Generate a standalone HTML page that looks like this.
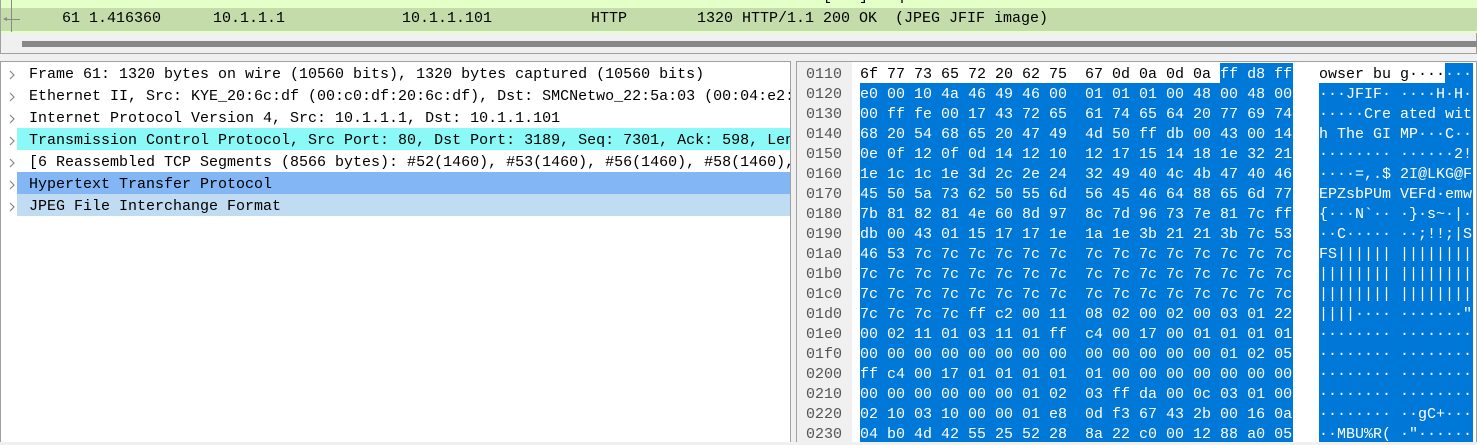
<!DOCTYPE html>
<html><head><style>
*{margin:0;padding:0;box-sizing:border-box}
body{width:1477px;height:442px;overflow:hidden;background:#f0f0f0;position:relative;font-family:"Liberation Mono",monospace;font-size:15px;color:#000}
.a{position:absolute;white-space:pre}
.r{position:absolute;height:22px;line-height:22px;white-space:pre}
.h{position:absolute;height:20px;line-height:20px;white-space:pre}
.c{position:absolute;left:8px;width:8px;height:10px}
</style></head><body>
<div class="a" style="left:0;top:0;width:1477px;height:54px;border:1px solid #a0a0a0;border-top:none;background:#f0f0f0"></div>
<div class="a" style="left:1px;top:0;width:1476px;height:8px;background:#e4ffc7"></div>
<div class="r" style="left:1px;top:-14px;width:1476px;"><span class="a" style="left:44px">60 1.415594</span><span class="a" style="left:212px">10.1.1.101</span><span class="a" style="left:401px">10.1.1.1</span><span class="a" style="left:590px">TCP</span><span class="a" style="left:705px">54 3189 → 80 [ACK] Seq=598 Ack=7301 Win=65535 Len=0</span></div>
<div class="r" style="left:1px;top:8px;width:1476px;height:23px;background:#c3dca9"><span class="a" style="left:61px">61 1.416360</span><span class="a" style="left:212px">10.1.1.1</span><span class="a" style="left:401px">10.1.1.101</span><span class="a" style="left:590px">HTTP</span><span class="a" style="left:696px">1320 HTTP/1.1 200 OK  (JPEG JFIF image)</span></div>
<div class="a" style="left:1px;top:31px;width:1476px;height:2px;background:#e4ffc7"></div>
<div class="a" style="left:11px;top:0;width:1px;height:32px;background:#888"></div>
<div class="a" style="left:4px;top:19px;width:16px;height:1px;background:#888"></div>
<div class="a" style="left:3px;top:17px;width:0;height:0;border:2.5px solid transparent;border-right:4px solid #888;border-left:none"></div>
<div class="a" style="left:22px;top:41px;width:1455px;height:6px;background:#888"></div>

<div class="a" style="left:0;top:61px;width:791px;height:381px;background:#fff;border:1px solid #a0a0a0;border-bottom:none"></div>
<div class="r" style="left:17px;top:128px;width:773px;background:#8bf9f8"></div>
<div class="r" style="left:17px;top:172px;width:773px;background:#82b6f4"></div>
<div class="r" style="left:17px;top:194px;width:773px;background:#c0dcf2"></div>
<div style="position:absolute;left:0;top:64px;width:790px;height:160px;overflow:hidden">
<div class="r" style="left:29px;top:0">Frame 61: 1320 bytes on wire (10560 bits), 1320 bytes captured (10560 bits)</div>
<div class="r" style="left:29px;top:22px">Ethernet II, Src: KYE_20:6c:df (00:c0:df:20:6c:df), Dst: SMCNetwo_22:5a:03 (00:04:e2:22:5a:03)</div>
<div class="r" style="left:29px;top:44px">Internet Protocol Version 4, Src: 10.1.1.1, Dst: 10.1.1.101</div>
<div class="r" style="left:29px;top:66px">Transmission Control Protocol, Src Port: 80, Dst Port: 3189, Seq: 7301, Ack: 598, Len: 1266</div>
<div class="r" style="left:29px;top:88px">[6 Reassembled TCP Segments (8566 bytes): #52(1460), #53(1460), #56(1460), #58(1460), #59(1460), #61(1266)]</div>
<div class="r" style="left:29px;top:110px">Hypertext Transfer Protocol</div>
<div class="r" style="left:29px;top:132px">JPEG File Interchange Format</div>
<svg class="c" style="top:6px" viewBox="0 0 8 10"><path d="M2 1l4 4-4 4" fill="none" stroke="#888" stroke-width="1.2"/></svg>
<svg class="c" style="top:28px" viewBox="0 0 8 10"><path d="M2 1l4 4-4 4" fill="none" stroke="#888" stroke-width="1.2"/></svg>
<svg class="c" style="top:50px" viewBox="0 0 8 10"><path d="M2 1l4 4-4 4" fill="none" stroke="#888" stroke-width="1.2"/></svg>
<svg class="c" style="top:72px" viewBox="0 0 8 10"><path d="M2 1l4 4-4 4" fill="none" stroke="#888" stroke-width="1.2"/></svg>
<svg class="c" style="top:94px" viewBox="0 0 8 10"><path d="M2 1l4 4-4 4" fill="none" stroke="#888" stroke-width="1.2"/></svg>
<svg class="c" style="top:116px" viewBox="0 0 8 10"><path d="M2 1l4 4-4 4" fill="none" stroke="#888" stroke-width="1.2"/></svg>
<svg class="c" style="top:138px" viewBox="0 0 8 10"><path d="M2 1l4 4-4 4" fill="none" stroke="#888" stroke-width="1.2"/></svg>
</div>

<div class="a" style="left:796px;top:61px;width:681px;height:381px;background:#fff;border:1px solid #a0a0a0;border-bottom:none"></div>
<div class="a" style="left:797px;top:62px;width:55px;height:380px;background:#f0f0f0"></div>
<div class="a" style="left:1220px;top:63px;width:73px;height:20px;background:#0078d7"></div>
<div class="a" style="left:860px;top:83px;width:433px;height:359px;background:#0078d7"></div>
<div class="a" style="left:1445px;top:63px;width:28px;height:20px;background:#0078d7"></div>
<div class="a" style="left:1319px;top:83px;width:154px;height:359px;background:#0078d7"></div>
<div style="position:absolute;left:0;top:65px;width:1477px;height:377px;">
<div class="h" style="left:806px;top:0;color:#555;line-height:20px">0110
0120
0130
0140
0150
0160
0170
0180
0190
01a0
01b0
01c0
01d0
01e0
01f0
0200
0210
0220
0230</div>
<div class="h" style="left:860px;top:0;">6f 77 73 65 72 20 62 75  67 0d 0a 0d 0a <span style="color:#fff">ff d8 ff</span></div>
<div class="h" style="left:1319px;top:0;">owser bu g····<span style="color:#fff">···</span></div>
<div class="h" style="left:860px;top:20px;color:#fff">e0 00 10 4a 46 49 46 00  01 01 01 00 48 00 48 00
00 ff fe 00 17 43 72 65  61 74 65 64 20 77 69 74
68 20 54 68 65 20 47 49  4d 50 ff db 00 43 00 14
0e 0f 12 0f 0d 14 12 10  12 17 15 14 18 1e 32 21
1e 1c 1c 1e 3d 2c 2e 24  32 49 40 4c 4b 47 40 46
45 50 5a 73 62 50 55 6d  56 45 46 64 88 65 6d 77
7b 81 82 81 4e 60 8d 97  8c 7d 96 73 7e 81 7c ff
db 00 43 01 15 17 17 1e  1a 1e 3b 21 21 3b 7c 53
46 53 7c 7c 7c 7c 7c 7c  7c 7c 7c 7c 7c 7c 7c 7c
7c 7c 7c 7c 7c 7c 7c 7c  7c 7c 7c 7c 7c 7c 7c 7c
7c 7c 7c 7c 7c 7c 7c 7c  7c 7c 7c 7c 7c 7c 7c 7c
7c 7c 7c 7c ff c2 00 11  08 02 00 02 00 03 01 22
00 02 11 01 03 11 01 ff  c4 00 17 00 01 01 01 01
00 00 00 00 00 00 00 00  00 00 00 00 00 01 02 05
ff c4 00 17 01 01 01 01  01 00 00 00 00 00 00 00
00 00 00 00 00 00 01 02  03 ff da 00 0c 03 01 00
02 10 03 10 00 00 01 e8  0d f3 67 43 2b 00 16 0a
04 b0 4d 42 55 25 52 28  8a 22 c0 00 12 88 a0 05</div>
<div class="h" style="left:1319px;top:20px;color:#fff">···JFIF· ····H·H·
·····Cre ated wit
h The GI MP···C··
········ ······2!
····=,.$ 2I@LKG@F
EPZsbPUm VEFd·emw
{···N`·· ·}·s~·|·
··C····· ··;!!;|S
FS|||||| ||||||||
|||||||| ||||||||
|||||||| ||||||||
||||···· ·······"
········ ········
········ ········
········ ········
········ ········
········ ··gC+···
··MBU%R( ·"······</div>
</div>
</body></html>
